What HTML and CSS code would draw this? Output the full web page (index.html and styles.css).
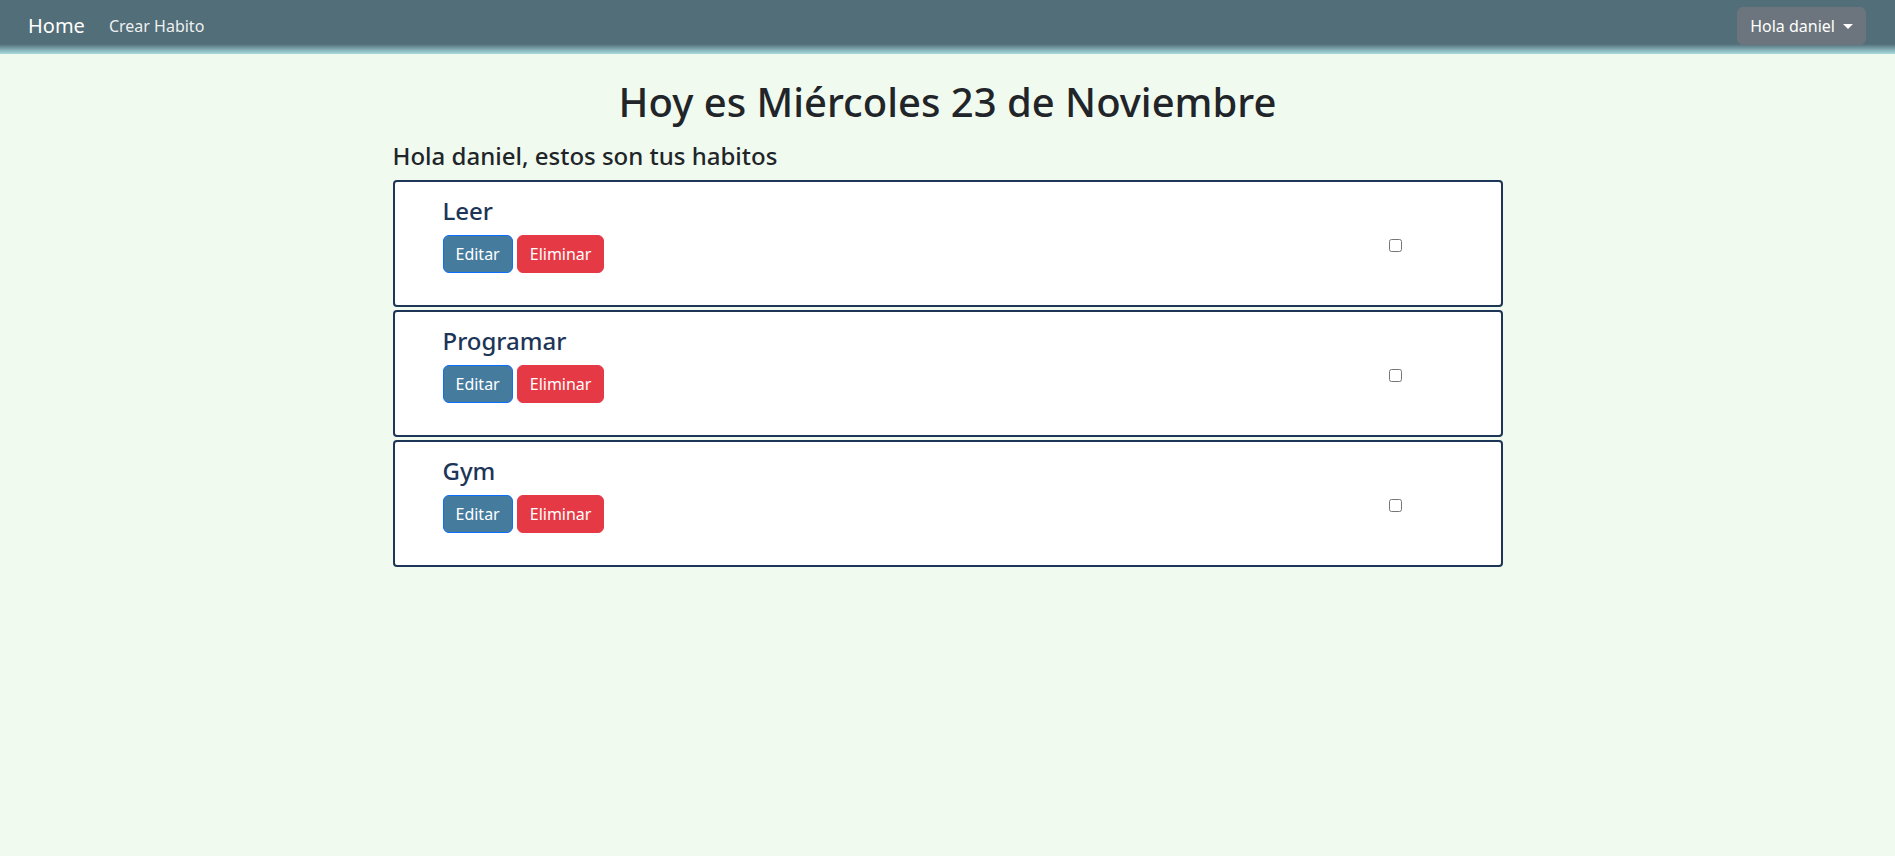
FILE: index.html
```html
<!DOCTYPE html>
<html lang="es">
<head>
<meta charset="utf-8">
<title>Habitos</title>
<link rel="stylesheet" href="styles.css">
</head>
<body>
<nav class="navbar">
  <div class="nav-left">
    <a class="brand" href="#">Home</a>
    <a class="nav-link" href="#">Crear Habito</a>
  </div>
  <button class="dropdown-btn" type="button">Hola daniel <span class="caret"></span></button>
</nav>
<main class="container">
  <h1 class="title">Hoy es Miércoles 23 de Noviembre</h1>
  <h4 class="subtitle">Hola daniel, estos son tus habitos</h4>
  <div class="habit-list">
    <div class="habit-card">
      <div class="habit-main">
        <h4 class="habit-name">Leer</h4>
        <div class="actions">
          <button class="btn btn-edit" type="button">Editar</button>
          <button class="btn btn-delete" type="button">Eliminar</button>
        </div>
      </div>
      <div class="habit-check"><input type="checkbox"></div>
    </div>
    <div class="habit-card">
      <div class="habit-main">
        <h4 class="habit-name">Programar</h4>
        <div class="actions">
          <button class="btn btn-edit" type="button">Editar</button>
          <button class="btn btn-delete" type="button">Eliminar</button>
        </div>
      </div>
      <div class="habit-check"><input type="checkbox"></div>
    </div>
    <div class="habit-card">
      <div class="habit-main">
        <h4 class="habit-name">Gym</h4>
        <div class="actions">
          <button class="btn btn-edit" type="button">Editar</button>
          <button class="btn btn-delete" type="button">Eliminar</button>
        </div>
      </div>
      <div class="habit-check"><input type="checkbox"></div>
    </div>
  </div>
</main>
</body>
</html>
```
FILE: styles.css
```css
* { box-sizing: border-box; }
html, body {
  margin: 0;
  padding: 0;
}
body {
  background: #f1faee;
  font-family: "Noto Sans", "Open Sans", sans-serif;
  color: #212529;
  font-size: 16px;
  line-height: 1.5;
}
.navbar {
  height: 54px;
  display: flex;
  align-items: center;
  justify-content: space-between;
  padding: 0 29px 2px 28px;
  background: linear-gradient(to bottom, #526e78 0, #526e78 44px, #8fbcc4 51px, #a8dadc 54px);
}
.nav-left {
  display: flex;
  align-items: center;
}
.brand {
  color: #fff;
  font-size: 20px;
  text-decoration: none;
  margin-right: 24px;
}
.nav-link {
  color: rgba(255,255,255,0.92);
  font-size: 16px;
  text-decoration: none;
}
.dropdown-btn {
  font-family: inherit;
  font-size: 16px;
  line-height: 24px;
  color: #fff;
  background: #6c757d;
  border: 1px solid #6c757d;
  border-radius: 6px;
  padding: 6px 12px;
  display: flex;
  align-items: center;
}
.caret {
  display: inline-block;
  margin-left: 8px;
  border-top: 5px solid #fff;
  border-left: 5px solid transparent;
  border-right: 5px solid transparent;
}
.container {
  width: 1110px;
  margin: 0 auto;
}
.title {
  margin: 24px 0 16px;
  text-align: center;
  font-size: 40px;
  font-weight: 500;
  line-height: 1.2;
}
.subtitle {
  margin: 0 0 9px;
  font-size: 24px;
  font-weight: 500;
  line-height: 1.2;
}
.habit-list {
  display: flex;
  flex-direction: column;
  gap: 3px;
}
.habit-card {
  background: #fff;
  border: 2px solid #1d3557;
  border-radius: 4px;
  height: 127px;
  display: flex;
  align-items: center;
  padding: 0 48px;
}
.habit-main {
  flex: 1;
  align-self: flex-start;
  padding-top: 15px;
}
.habit-name {
  margin: 0 0 9px;
  font-size: 24px;
  font-weight: 500;
  line-height: 1.2;
  color: #1d3557;
}
.actions {
  display: flex;
  gap: 4px;
}
.btn {
  font-family: inherit;
  font-size: 16px;
  line-height: 24px;
  padding: 6px 12px;
  border-radius: 6px;
  color: #fff;
  cursor: pointer;
}
.btn-edit {
  background: #457b9d;
  border: 1px solid #0d6efd;
}
.btn-delete {
  background: #e63946;
  border: 1px solid #e63946;
}
.habit-check {
  width: 68px;
  display: flex;
  align-items: center;
}
.habit-check input {
  margin: 5px 3px 1px 4px;
  width: 13px;
  height: 13px;
}
```
